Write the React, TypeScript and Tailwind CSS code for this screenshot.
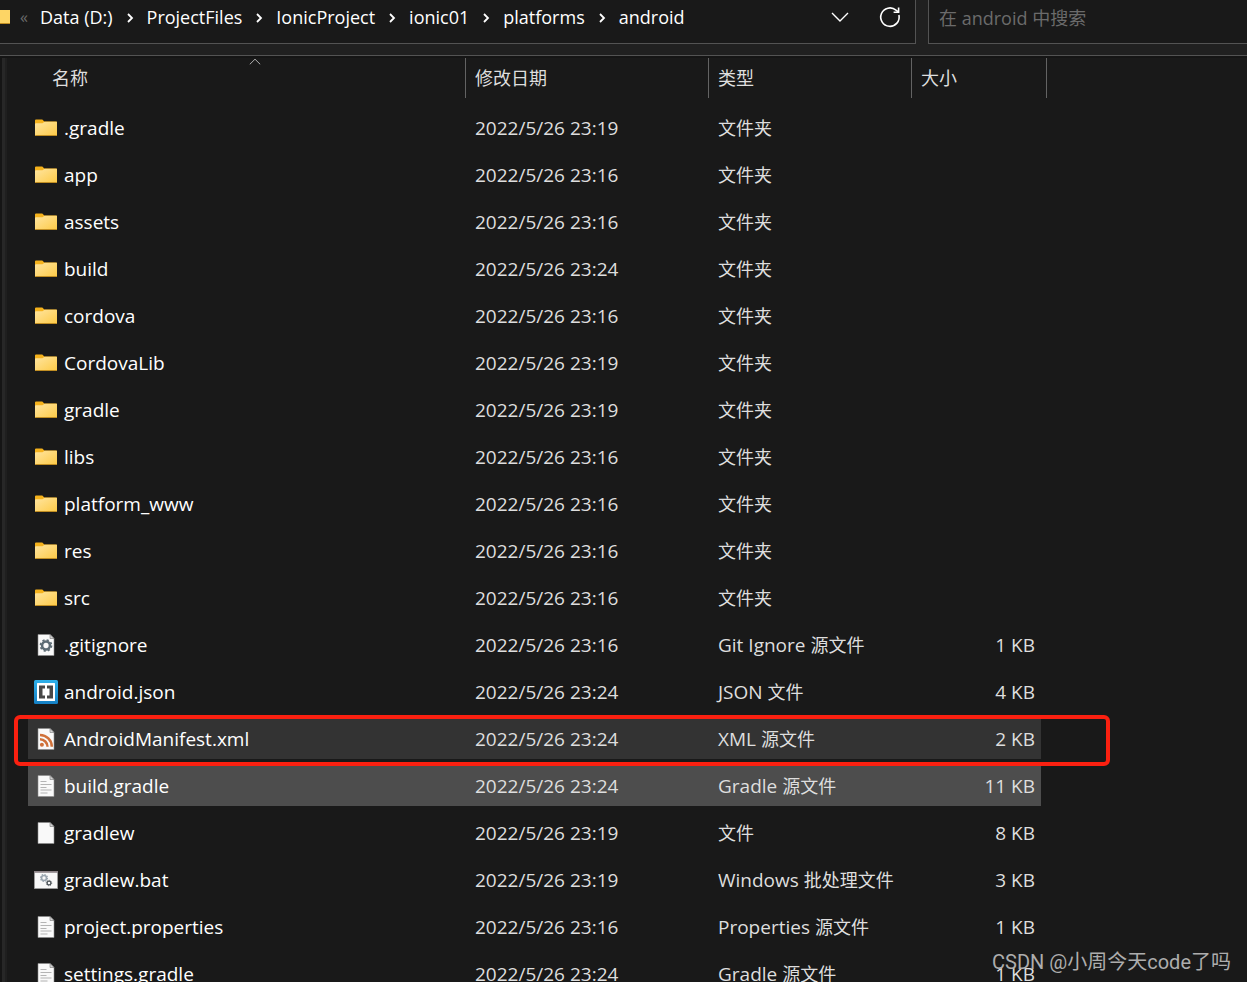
import React from "react";

type Kind = "folder" | "gear" | "brackets" | "rss" | "text" | "blank" | "batch";

interface Entry {
  name: string;
  date: string;
  type: string;
  size?: string;
  kind: Kind;
  state?: "hover" | "selected";
}

const entries: Entry[] = [
  { name: ".gradle", date: "2022/5/26 23:19", type: "文件夹", kind: "folder" },
  { name: "app", date: "2022/5/26 23:16", type: "文件夹", kind: "folder" },
  { name: "assets", date: "2022/5/26 23:16", type: "文件夹", kind: "folder" },
  { name: "build", date: "2022/5/26 23:24", type: "文件夹", kind: "folder" },
  { name: "cordova", date: "2022/5/26 23:16", type: "文件夹", kind: "folder" },
  { name: "CordovaLib", date: "2022/5/26 23:19", type: "文件夹", kind: "folder" },
  { name: "gradle", date: "2022/5/26 23:19", type: "文件夹", kind: "folder" },
  { name: "libs", date: "2022/5/26 23:16", type: "文件夹", kind: "folder" },
  { name: "platform_www", date: "2022/5/26 23:16", type: "文件夹", kind: "folder" },
  { name: "res", date: "2022/5/26 23:16", type: "文件夹", kind: "folder" },
  { name: "src", date: "2022/5/26 23:16", type: "文件夹", kind: "folder" },
  { name: ".gitignore", date: "2022/5/26 23:16", type: "Git Ignore 源文件", size: "1 KB", kind: "gear" },
  { name: "android.json", date: "2022/5/26 23:24", type: "JSON 文件", size: "4 KB", kind: "brackets" },
  { name: "AndroidManifest.xml", date: "2022/5/26 23:24", type: "XML 源文件", size: "2 KB", kind: "rss", state: "hover" },
  { name: "build.gradle", date: "2022/5/26 23:24", type: "Gradle 源文件", size: "11 KB", kind: "text", state: "selected" },
  { name: "gradlew", date: "2022/5/26 23:19", type: "文件", size: "8 KB", kind: "blank" },
  { name: "gradlew.bat", date: "2022/5/26 23:19", type: "Windows 批处理文件", size: "3 KB", kind: "batch" },
  { name: "project.properties", date: "2022/5/26 23:16", type: "Properties 源文件", size: "1 KB", kind: "text" },
  { name: "settings.gradle", date: "2022/5/26 23:24", type: "Gradle 源文件", size: "1 KB", kind: "text" },
];

const crumbs = ["Data (D:)", "ProjectFiles", "IonicProject", "ionic01", "platforms", "android"];

function FolderIcon() {
  return (
    <svg viewBox="0 0 24 24" className="size-6 shrink-0" aria-hidden="true">
      <defs>
        <linearGradient id="folder-front" x1="0" y1="0" x2="1" y2="1">
          <stop offset="0" stopColor="#ffe5a0" />
          <stop offset="1" stopColor="#fdca46" />
        </linearGradient>
      </defs>
      <path d="M1 4.5a1 1 0 0 1 1-1h6.3l2 2H22a1 1 0 0 1 1 1V12H1z" fill="#f5b21c" />
      <path d="M1 8.200q0-.9.9-.9h6.600l2-1.500H23v13.400q0 .8-.8.8H1.800q-.8 0-.8-.8z" fill="url(#folder-front)" />
      <path d="M1 18.900q0 1.100.8 1.100h20.400q.8 0 .8-1.100z" fill="#c08d22" />
    </svg>
  );
}

function Gear({ cx, cy, r, color }: { cx: number; cy: number; r: number; color: string }) {
  return (
    <g fill="none" stroke={color}>
      <circle cx={cx} cy={cy} r={r} strokeWidth={r * 0.65} />
      <circle cx={cx} cy={cy} r={r * 1.42} strokeWidth={r * 0.42} strokeDasharray={`${r * 0.56} ${r * 0.555}`} />
    </g>
  );
}

function Page({ children }: { children?: React.ReactNode }) {
  return (
    <svg viewBox="0 0 24 24" className="size-6 shrink-0" aria-hidden="true">
      <path d="M4 1.500h12l4 4V22.500H4z" fill="#f9f9f9" stroke="#8b8b8b" strokeWidth="0.6" />
      <path d="M16 1.500v4h4z" fill="#d4d4d4" stroke="#777" strokeWidth="0.6" />
      {children}
    </svg>
  );
}

function FileIcon({ kind }: { kind: Kind }) {
  switch (kind) {
    case "folder":
      return <FolderIcon />;
    case "gear":
      return (
        <Page>
          <Gear cx={12} cy={12.5} r={3.9} color="#5d6c75" />
        </Page>
      );
    case "brackets":
      return (
        <svg viewBox="0 0 24 24" className="size-6 shrink-0" aria-hidden="true">
          <defs>
            <linearGradient id="brackets-frame" x1="0" y1="0" x2="0" y2="1">
              <stop offset="0" stopColor="#2fb0ea" />
              <stop offset="1" stopColor="#1580c4" />
            </linearGradient>
          </defs>
          <rect width="24" height="24" rx="1.500" fill="url(#brackets-frame)" />
          <rect x="3" y="3" width="18" height="18" rx="0.5" fill="#fff" />
          <path d="M5 5.500h6v3H8.500v7H11v3H5zM19 5.500h-6v3h2.500v7H13v3h6z" fill="#484848" />
        </svg>
      );
    case "rss":
      return (
        <Page>
          <circle cx="7.900" cy="17.700" r="2" fill="#d0713a" />
          <path d="M6 12.300a7.500 7.500 0 0 1 7.500 7.500M6 8a11.800 11.800 0 0 1 11.800 11.800" fill="none" stroke="#d0713a" strokeWidth="2.500" />
        </Page>
      );
    case "text":
      return (
        <Page>
          <path d="M6.500 7.500h6M6.500 10.500h11M6.500 13.500h6M6.500 16h11M6.500 19h7" stroke="#b4b4b4" strokeWidth="1.200" />
        </Page>
      );
    case "blank":
      return <Page />;
    case "batch":
      return (
        <svg viewBox="0 0 24 24" className="size-6 shrink-0" aria-hidden="true">
          <rect x="0.300" y="3.300" width="23.400" height="17.400" fill="#f8f8f8" stroke="#8a8a8a" strokeWidth="0.6" />
          <path d="M0 3h24v1.800H0z" fill="#8d8488" />
          <Gear cx={10} cy={10} r={2.5} color="#9aa5af" />
          <Gear cx={15} cy={15} r={1.9} color="#4b5257" />
        </svg>
      );
  }
}

/* Han glyphs are set one step smaller than the Latin text beside them. */
function Mixed({ text }: { text: string }) {
  return (
    <>
      {text.split(/([\u4e00-\u9fff]+)/).map((part, i) =>
        i % 2 ? (
          <span key={i} className="text-[18px]">
            {part}
          </span>
        ) : (
          part
        ),
      )}
    </>
  );
}

function AddressBar() {
  return (
    <div className="flex min-w-0 flex-1 items-center border-r border-b border-[#535353] bg-[#191919] pb-2.5">
      <svg viewBox="0 0 10 16" className="h-4 w-2.5 shrink-0" aria-hidden="true">
        <path d="M0 1h10v14H0z" fill="#fdd565" />
        <path d="M0 14h10v1H0z" fill="#c08d22" />
      </svg>
      <span className="ml-2.5 w-5 text-[16px] text-[#6b6b6b]">«</span>
      <nav aria-label="路径" className="flex flex-1 items-center text-[18px] text-white">
        {crumbs.map((c, i) => (
          <React.Fragment key={c}>
            {i > 0 && (
              <svg viewBox="0 0 8 12" className="mx-[13px] h-3 w-2 shrink-0 translate-y-px" aria-hidden="true">
                <path d="M2 2l4 4-4 4" fill="none" stroke="#fff" strokeWidth="1.800" />
              </svg>
            )}
            <a href="#" className="whitespace-nowrap">
              {c}
            </a>
          </React.Fragment>
        ))}
      </nav>
      <button type="button" aria-label="以前的位置" className="mr-[26px] flex size-6 items-center justify-center">
        <svg viewBox="0 0 24 24" className="size-6" aria-hidden="true">
          <path d="M4 8l8 8 8-8" fill="none" stroke="#fff" strokeWidth="1.400" />
        </svg>
      </button>
      <button type="button" aria-label="刷新" className="mr-[13px] flex size-6 items-center justify-center">
        <svg viewBox="0 0 24 24" className="size-6" aria-hidden="true">
          <path d="M20.900 10A9.200 9.200 0 1 1 18 5.200L20.300 7" fill="none" stroke="#fff" strokeWidth="1.600" />
          <path d="M20.600 2.500v4.800h-5" fill="none" stroke="#fff" strokeWidth="1.600" />
        </svg>
      </button>
    </div>
  );
}

const headers = ["名称", "修改日期", "类型", "大小"];

export default function App() {
  return (
    <div className="relative flex h-screen flex-col overflow-hidden bg-[#191919] font-['Open_Sans','Noto_Sans_CJK_SC',sans-serif] text-[19px] leading-6 text-[#dedede]">
      <header className="flex shrink-0 gap-3 border-b border-[#535353] bg-[#202020] pb-[11px]">
        <AddressBar />
        <div className="h-11 w-[319px] border-b border-l border-[#535353] bg-[#191919] pb-2">
          <input
            type="search"
            aria-label="搜索"
            placeholder="在 android 中搜索"
            className="h-full w-full bg-transparent pl-2.5 text-[18px] outline-none placeholder:text-[#6b6b6b]"
          />
        </div>
      </header>
      <main className="flex min-h-0 flex-1 overflow-hidden border-t-2 border-[#151515]">
        <div className="mr-[21px] w-[7px] shrink-0 border-r-2 border-l-2 border-r-[#1f1f1f] border-l-[#151515] bg-[#272727]" />
        <table className="w-[1019px] shrink-0 table-fixed border-separate border-spacing-0 self-start">
          <colgroup>
            <col className="w-[438px]" />
            <col className="w-[243px]" />
            <col className="w-[203px]" />
            <col className="w-[135px]" />
          </colgroup>
          <thead>
            <tr>
              {headers.map((h, i) => (
                <th key={h} scope="col" className="h-[46px] p-0 text-left align-top text-[18px] font-normal">
                  <div
                    className={
                      i === 0
                        ? "relative flex h-10 items-center border-r border-[#636363] pl-6"
                        : "flex h-10 items-center border-r border-[#636363] pl-[9px]"
                    }
                  >
                    {h}
                    {i === 0 && (
                      <svg viewBox="0 0 12 7" className="absolute top-0 left-[221px] h-[7px] w-3" aria-hidden="true">
                        <path d="M.8 6.300L6 1.200l5.200 5.100" fill="none" stroke="#b0b0b0" />
                      </svg>
                    )}
                  </div>
                </th>
              ))}
            </tr>
          </thead>
          <tbody>
            {entries.map((e) => {
              const fill = e.state === "hover" ? "bg-[#333333]" : e.state === "selected" ? "bg-[#4d4d4d]" : "";
              const cell = `h-[47px] border-t-4 border-b-[3px] border-transparent bg-clip-padding py-0 whitespace-nowrap ${fill}`;
              return (
                <tr key={e.name} className="relative">
                  <td className={`${cell} px-1.5 text-white`}>
                    <div className="flex items-center gap-1.5">
                      <FileIcon kind={e.kind} />
                      {e.name}
                    </div>
                    {e.state === "hover" && (
                      <div className="pointer-events-none absolute top-0 -right-[63px] -left-3.5 z-10 h-[51px] rounded-md border-4 border-[#fb2010]" />
                    )}
                  </td>
                  <td className={`${cell} pl-[9px]`}>{e.date}</td>
                  <td className={`${cell} pl-[9px]`}>
                    <Mixed text={e.type} />
                  </td>
                  <td className={`${cell} border-r-[6px] pr-1.5 text-right`}>{e.size}</td>
                </tr>
              );
            })}
          </tbody>
        </table>
      </main>
      <p className="pointer-events-none absolute right-4 bottom-2 font-['Roboto','Noto_Sans_CJK_SC',sans-serif] text-[20px] text-[#adadad]">
        CSDN @小周今天code了吗
      </p>
    </div>
  );
}
